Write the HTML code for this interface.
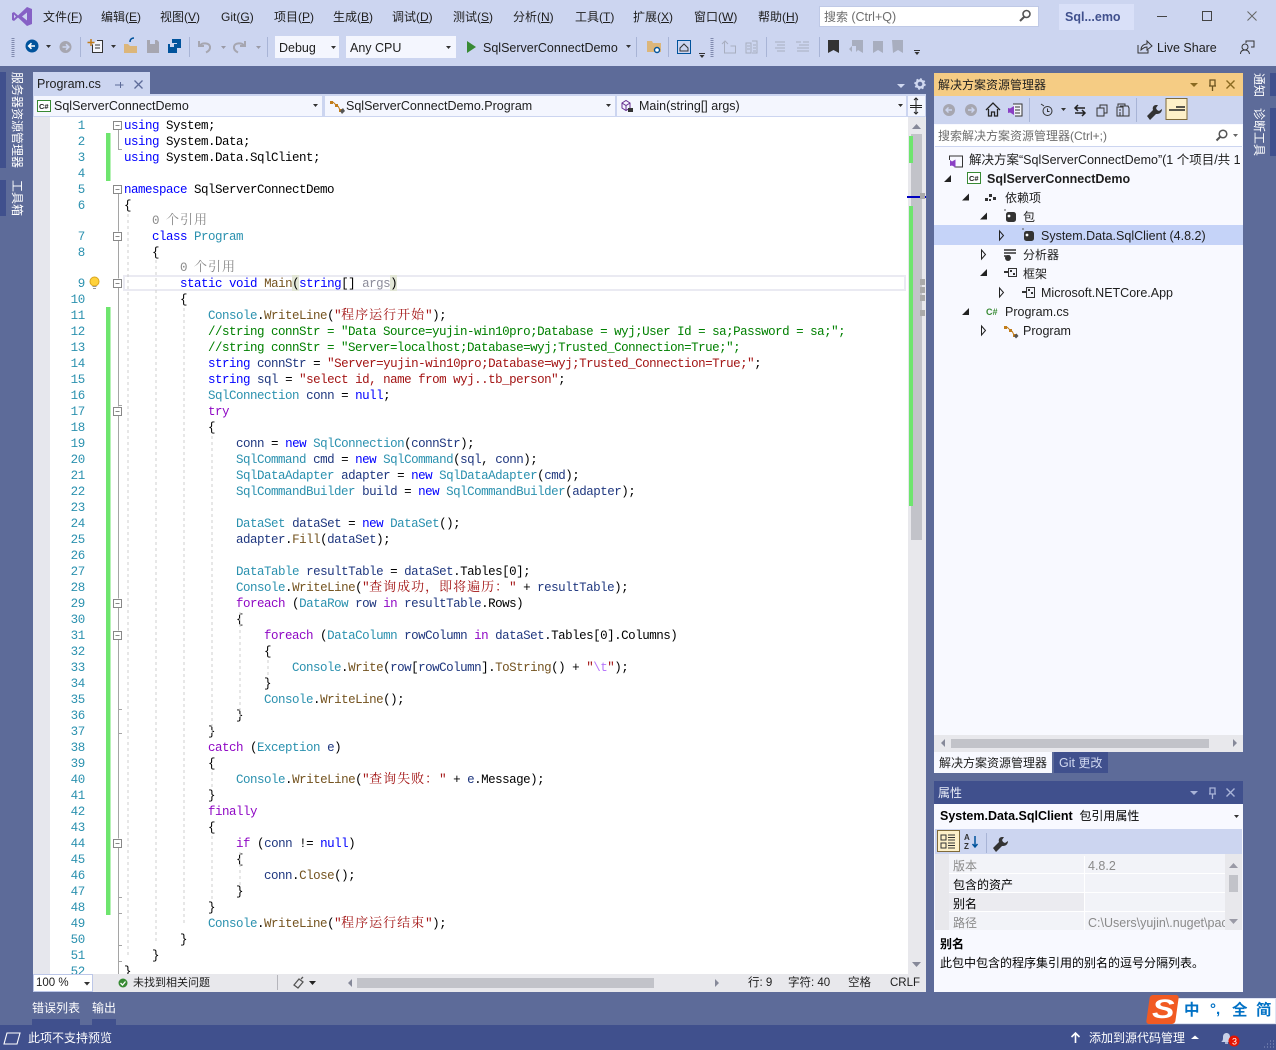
<!DOCTYPE html>
<html><head><meta charset="utf-8"><style>
*{margin:0;padding:0;box-sizing:border-box}
html,body{width:1276px;height:1050px;overflow:hidden;background:#5d6b99}
body{position:relative;font-family:"Liberation Sans","Noto Sans CJK SC",sans-serif;font-size:12px;color:#1e1e1e}
.b{position:absolute}
.t{position:absolute;white-space:nowrap;line-height:16px}
.t u{text-decoration:underline}
.n{font-size:12.5px}
svg.o{position:absolute;left:0;top:0;z-index:5}
#code{position:absolute;left:33px;top:117px;width:875px;height:857px;overflow:hidden;background:#fff;z-index:1}
.r{position:absolute;left:0;height:16px;width:875px;font:12.5px/18px "Liberation Mono","Noto Serif CJK SC",monospace;letter-spacing:-.5px;white-space:pre;padding-left:91px;color:#000}
.r i{position:absolute;left:0;width:52px;text-align:right;font-style:normal;color:#2b91af;letter-spacing:-.3px}
.k{color:#00f}.p{color:#8f08c4}.y{color:#2b91af}.s{color:#a31515}.m{color:#74531f}.v{color:#1f377f}.g{color:#008000}.e{color:#b776fb}
.z{font-size:13px;letter-spacing:1px}
.l{color:#8a8a8a}
.vt{position:absolute;writing-mode:vertical-rl;text-orientation:sideways;color:#fff;font-size:12px;line-height:12px;white-space:nowrap}
</style></head><body>

<div class="b" style="left:0;top:0;width:1276px;height:66px;background:#ccd5f0"></div>

<!-- menu -->
<div class="t" style="left:43px;top:9px">文件(<u>F</u>)</div>
<div class="t" style="left:101px;top:9px">编辑(<u>E</u>)</div>
<div class="t" style="left:160px;top:9px">视图(<u>V</u>)</div>
<div class="t" style="left:221px;top:9px">Git(<u>G</u>)</div>
<div class="t" style="left:274px;top:9px">项目(<u>P</u>)</div>
<div class="t" style="left:333px;top:9px">生成(<u>B</u>)</div>
<div class="t" style="left:392px;top:9px">调试(<u>D</u>)</div>
<div class="t" style="left:453px;top:9px">测试(<u>S</u>)</div>
<div class="t" style="left:513px;top:9px">分析(<u>N</u>)</div>
<div class="t" style="left:575px;top:9px">工具(<u>T</u>)</div>
<div class="t" style="left:633px;top:9px">扩展(<u>X</u>)</div>
<div class="t" style="left:694px;top:9px">窗口(<u>W</u>)</div>
<div class="t" style="left:758px;top:9px">帮助(<u>H</u>)</div>

<div class="b" style="left:819px;top:6px;width:220px;height:21px;background:#fff;border:1px solid #bfc9e6"></div>
<div class="t" style="left:824px;top:9px;color:#6d6d6d">搜索 <span class="n">(Ctrl+Q)</span></div>
<div class="b" style="left:1059px;top:4px;width:75px;height:26px;background:#d9e0f8"></div>
<div class="t n" style="left:1065px;top:9px;font-weight:bold;color:#40508d">Sql...emo</div>

<!-- toolbar combos -->
<div class="b" style="left:275px;top:36px;width:64px;height:22px;background:#f4f6fe"></div>
<div class="t n" style="left:279px;top:40px">Debug</div>
<div class="b" style="left:346px;top:36px;width:110px;height:22px;background:#f4f6fe"></div>
<div class="t n" style="left:350px;top:40px">Any CPU</div>
<div class="t n" style="left:483px;top:40px">SqlServerConnectDemo</div>
<div class="t n" style="left:1157px;top:40px">Live Share</div>

<!-- left tabs -->
<div class="b" style="left:0;top:72px;width:6px;height:96px;background:#40508d"></div>
<div class="b" style="left:0;top:180px;width:6px;height:36px;background:#40508d"></div>
<div class="vt" style="left:11px;top:72px">服务器资源管理器</div>
<div class="vt" style="left:11px;top:180px">工具箱</div>

<!-- right tabs -->
<div class="b" style="left:1270px;top:73px;width:6px;height:23px;background:#40508d"></div>
<div class="b" style="left:1270px;top:108px;width:6px;height:48px;background:#40508d"></div>
<div class="vt" style="left:1253px;top:73px">通知</div>
<div class="vt" style="left:1253px;top:108px">诊断工具</div>

<!-- doc tab -->
<div class="b" style="left:33px;top:72px;width:117px;height:23px;background:#ccd5f0"></div>
<div class="t n" style="left:37px;top:76px">Program.cs</div>
<div class="b" style="left:33px;top:94px;width:893px;height:23px;background:#ccd5f0"></div>
<div class="b" style="left:34px;top:96px;width:288px;height:20px;background:#f4f6fe"></div>
<div class="b" style="left:325px;top:96px;width:290px;height:20px;background:#f4f6fe"></div>
<div class="b" style="left:617px;top:96px;width:289px;height:20px;background:#f4f6fe"></div>
<div class="b" style="left:908px;top:96px;width:17px;height:20px;background:#f4f6fe"></div>
<div class="t n" style="left:54px;top:98px">SqlServerConnectDemo</div>
<div class="t n" style="left:346px;top:98px">SqlServerConnectDemo.Program</div>
<div class="t n" style="left:639px;top:98px">Main(string[] args)</div>

<!-- code -->
<div id="code">
<div class="b" style="left:0;top:0;width:17px;height:857px;background:#e6e7ed"></div>
<div class="b" style="left:90px;top:158px;width:783px;height:16px;border:2px solid #eaeaf2"></div>
<div class="b" style="left:259px;top:158px;width:7px;height:16px;background:#e2e6d6"></div>
<div class="b" style="left:357px;top:158px;width:7px;height:16px;background:#e2e6d6"></div>

<div class="r" style="top:0"><i>1</i><span class="k">using</span> System;</div>
<div class="r" style="top:16px"><i>2</i><span class="k">using</span> System.Data;</div>
<div class="r" style="top:32px"><i>3</i><span class="k">using</span> System.Data.SqlClient;</div>
<div class="r" style="top:48px"><i>4</i></div>
<div class="r" style="top:64px"><i>5</i><span class="k">namespace</span> SqlServerConnectDemo</div>
<div class="r" style="top:80px"><i>6</i>{</div>
<div class="r l" style="top:95px;padding-left:119px">0 <span class="z">个引用</span></div>
<div class="r" style="top:111px"><i>7</i>    <span class="k">class</span> <span class="y">Program</span></div>
<div class="r" style="top:127px"><i>8</i>    {</div>
<div class="r l" style="top:142px;padding-left:147px">0 <span class="z">个引用</span></div>
<div class="r" style="top:158px"><i>9</i>        <span class="k">static</span> <span class="k">void</span> <span class="m">Main</span>(<span class="k">string</span>[] <span style="color:#8c8c9a">args</span>)</div>
<div class="r" style="top:174px"><i>10</i>        {</div>
<div class="r" style="top:190px"><i>11</i>            <span class="y">Console</span>.<span class="m">WriteLine</span>(<span class="s">"<span class="z">程序运行开始</span>"</span>);</div>
<div class="r g" style="top:206px"><i>12</i>            //string connStr = "Data Source=yujin-win10pro;Database = wyj;User Id = sa;Password = sa;";</div>
<div class="r g" style="top:222px"><i>13</i>            //string connStr = "Server=localhost;Database=wyj;Trusted_Connection=True;";</div>
<div class="r" style="top:238px"><i>14</i>            <span class="k">string</span> <span class="v">connStr</span> = <span class="s">"Server=yujin-win10pro;Database=wyj;Trusted_Connection=True;"</span>;</div>
<div class="r" style="top:254px"><i>15</i>            <span class="k">string</span> <span class="v">sql</span> = <span class="s">"select id, name from wyj..tb_person"</span>;</div>
<div class="r" style="top:270px"><i>16</i>            <span class="y">SqlConnection</span> <span class="v">conn</span> = <span class="k">null</span>;</div>
<div class="r" style="top:286px"><i>17</i>            <span class="p">try</span></div>
<div class="r" style="top:302px"><i>18</i>            {</div>
<div class="r" style="top:318px"><i>19</i>                <span class="v">conn</span> = <span class="k">new</span> <span class="y">SqlConnection</span>(<span class="v">connStr</span>);</div>
<div class="r" style="top:334px"><i>20</i>                <span class="y">SqlCommand</span> <span class="v">cmd</span> = <span class="k">new</span> <span class="y">SqlCommand</span>(<span class="v">sql</span>, <span class="v">conn</span>);</div>
<div class="r" style="top:350px"><i>21</i>                <span class="y">SqlDataAdapter</span> <span class="v">adapter</span> = <span class="k">new</span> <span class="y">SqlDataAdapter</span>(<span class="v">cmd</span>);</div>
<div class="r" style="top:366px"><i>22</i>                <span class="y">SqlCommandBuilder</span> <span class="v">build</span> = <span class="k">new</span> <span class="y">SqlCommandBuilder</span>(<span class="v">adapter</span>);</div>
<div class="r" style="top:382px"><i>23</i></div>
<div class="r" style="top:398px"><i>24</i>                <span class="y">DataSet</span> <span class="v">dataSet</span> = <span class="k">new</span> <span class="y">DataSet</span>();</div>
<div class="r" style="top:414px"><i>25</i>                <span class="v">adapter</span>.<span class="m">Fill</span>(<span class="v">dataSet</span>);</div>
<div class="r" style="top:430px"><i>26</i></div>
<div class="r" style="top:446px"><i>27</i>                <span class="y">DataTable</span> <span class="v">resultTable</span> = <span class="v">dataSet</span>.Tables[0];</div>
<div class="r" style="top:462px"><i>28</i>                <span class="y">Console</span>.<span class="m">WriteLine</span>(<span class="s">"<span class="z">查询成功，即将遍历：</span>"</span> + <span class="v">resultTable</span>);</div>
<div class="r" style="top:478px"><i>29</i>                <span class="p">foreach</span> (<span class="y">DataRow</span> <span class="v">row</span> <span class="p">in</span> <span class="v">resultTable</span>.Rows)</div>
<div class="r" style="top:494px"><i>30</i>                {</div>
<div class="r" style="top:510px"><i>31</i>                    <span class="p">foreach</span> (<span class="y">DataColumn</span> <span class="v">rowColumn</span> <span class="p">in</span> <span class="v">dataSet</span>.Tables[0].Columns)</div>
<div class="r" style="top:526px"><i>32</i>                    {</div>
<div class="r" style="top:542px"><i>33</i>                        <span class="y">Console</span>.<span class="m">Write</span>(<span class="v">row</span>[<span class="v">rowColumn</span>].<span class="m">ToString</span>() + <span class="s">"</span><span class="e">\t</span><span class="s">"</span>);</div>
<div class="r" style="top:558px"><i>34</i>                    }</div>
<div class="r" style="top:574px"><i>35</i>                    <span class="y">Console</span>.<span class="m">WriteLine</span>();</div>
<div class="r" style="top:590px"><i>36</i>                }</div>
<div class="r" style="top:606px"><i>37</i>            }</div>
<div class="r" style="top:622px"><i>38</i>            <span class="p">catch</span> (<span class="y">Exception</span> <span class="v">e</span>)</div>
<div class="r" style="top:638px"><i>39</i>            {</div>
<div class="r" style="top:654px"><i>40</i>                <span class="y">Console</span>.<span class="m">WriteLine</span>(<span class="s">"<span class="z">查询失败：</span>"</span> + <span class="v">e</span>.Message);</div>
<div class="r" style="top:670px"><i>41</i>            }</div>
<div class="r" style="top:686px"><i>42</i>            <span class="p">finally</span></div>
<div class="r" style="top:702px"><i>43</i>            {</div>
<div class="r" style="top:718px"><i>44</i>                <span class="p">if</span> (<span class="v">conn</span> != <span class="k">null</span>)</div>
<div class="r" style="top:734px"><i>45</i>                {</div>
<div class="r" style="top:750px"><i>46</i>                    <span class="v">conn</span>.<span class="m">Close</span>();</div>
<div class="r" style="top:766px"><i>47</i>                }</div>
<div class="r" style="top:782px"><i>48</i>            }</div>
<div class="r" style="top:798px"><i>49</i>            <span class="y">Console</span>.<span class="m">WriteLine</span>(<span class="s">"<span class="z">程序运行结束</span>"</span>);</div>
<div class="r" style="top:814px"><i>50</i>        }</div>
<div class="r" style="top:830px"><i>51</i>    }</div>
<div class="r" style="top:846px"><i>52</i>}</div>
</div>

<!-- editor bottom bar -->
<div class="b" style="left:33px;top:974px;width:893px;height:18px;background:#e8e8ec;z-index:2"></div>
<div class="b" style="left:33px;top:974px;width:60px;height:18px;background:#fff;border:1px solid #bcc7e8;z-index:2"></div>
<div class="t" style="left:36px;top:975px;font-size:11.5px;z-index:3">100 %</div>
<div class="t" style="left:133px;top:975px;font-size:11px;z-index:3">未找到相关问题</div>
<div class="b" style="left:357px;top:978px;width:297px;height:10px;background:#c2c3c9;z-index:3"></div>
<div class="t" style="left:748px;top:975px;font-size:11.5px;z-index:3">行: 9</div>
<div class="t" style="left:788px;top:975px;font-size:11.5px;z-index:3">字符: 40</div>
<div class="t" style="left:848px;top:975px;font-size:11.5px;z-index:3">空格</div>
<div class="t" style="left:890px;top:975px;font-size:11.5px;z-index:3">CRLF</div>

<!-- editor vscroll -->
<div class="b" style="left:908px;top:117px;width:18px;height:857px;background:#e8e8ec;z-index:2"></div>
<div class="b" style="left:911px;top:134px;width:11px;height:406px;background:#c2c3c9;z-index:2"></div>
<div class="b" style="left:909px;top:136px;width:4px;height:27px;background:#6ee56e;z-index:3"></div>
<div class="b" style="left:909px;top:206px;width:4px;height:300px;background:#6ee56e;z-index:3"></div>
<div class="b" style="left:907px;top:196px;width:19px;height:2px;background:#0000c0;z-index:3"></div>
<div class="b" style="left:920px;top:193px;width:5px;height:6px;background:#aaa;z-index:3"></div>
<div class="b" style="left:920px;top:279px;width:5px;height:6px;background:#aaa;z-index:3"></div>
<div class="b" style="left:920px;top:287px;width:5px;height:6px;background:#aaa;z-index:3"></div>
<div class="b" style="left:920px;top:295px;width:5px;height:6px;background:#aaa;z-index:3"></div>
<div class="b" style="left:920px;top:310px;width:5px;height:6px;background:#aaa;z-index:3"></div>

<!-- solution explorer -->
<div class="b" style="left:934px;top:73px;width:309px;height:23px;background:#f5cc84"></div>
<div class="t" style="left:938px;top:77px">解决方案资源管理器</div>
<div class="b" style="left:934px;top:96px;width:309px;height:28px;background:#ccd5f0"></div>
<div class="b" style="left:934px;top:124px;width:309px;height:611px;background:#f8f9ff"></div>
<div class="b" style="left:935px;top:125px;width:307px;height:22px;background:#fff;border-bottom:1px solid #ccd5f0"></div>
<div class="t" style="left:938px;top:128px;color:#6d6d6d">搜索解决方案资源管理器(Ctrl+;)</div>
<div class="b" style="left:934px;top:225px;width:309px;height:20px;background:#c5d3f8"></div>
<div class="b" style="left:934px;top:150px;width:309px;height:200px;overflow:hidden">
<div class="t n" style="left:35px;top:2px">解决方案“SqlServerConnectDemo”(1 个项目/共 1 个)</div>
<div class="t n" style="left:53px;top:21px;font-weight:bold">SqlServerConnectDemo</div>
<div class="t" style="left:71px;top:40px">依赖项</div>
<div class="t" style="left:89px;top:59px">包</div>
<div class="t n" style="left:107px;top:78px">System.Data.SqlClient (4.8.2)</div>
<div class="t" style="left:89px;top:97px">分析器</div>
<div class="t" style="left:89px;top:116px">框架</div>
<div class="t n" style="left:107px;top:135px">Microsoft.NETCore.App</div>
<div class="t n" style="left:71px;top:154px">Program.cs</div>
<div class="t n" style="left:89px;top:173px">Program</div>
</div>
<div class="b" style="left:934px;top:735px;width:309px;height:17px;background:#e8e8ec"></div>
<div class="b" style="left:951px;top:739px;width:258px;height:9px;background:#c2c3c9"></div>
<div class="b" style="left:934px;top:752px;width:118px;height:21px;background:#f8f9ff"></div>
<div class="t" style="left:939px;top:755px">解决方案资源管理器</div>
<div class="b" style="left:1054px;top:752px;width:54px;height:21px;background:#40508d"></div>
<div class="t" style="left:1059px;top:755px;color:#d0d8f0"><span class="n">Git</span> 更改</div>

<!-- properties -->
<div class="b" style="left:934px;top:781px;width:309px;height:23px;background:#40508d"></div>
<div class="t" style="left:938px;top:785px;color:#e8ecf8">属性</div>
<div class="b" style="left:934px;top:804px;width:309px;height:188px;background:#f8f9ff"></div>
<div class="t" style="left:940px;top:808px;color:#000"><b class="n">System.Data.SqlClient</b>&nbsp; 包引用属性</div>
<div class="b" style="left:935px;top:829px;width:307px;height:25px;background:#ccd5f0"></div>
<div class="b" style="left:937px;top:830px;width:23px;height:22px;background:#fdf0c8;border:1px solid #7f6a3a"></div>
<div class="b" style="left:935px;top:854px;width:307px;height:76px;background:#f2f3f8"></div>
<div class="b" style="left:935px;top:854px;width:14px;height:76px;background:#e8e8ec"></div>
<div class="b" style="left:1225px;top:854px;width:17px;height:76px;background:#e8e8ec"></div>
<div class="b" style="left:1229px;top:875px;width:9px;height:17px;background:#c2c3c9"></div>
<div class="b" style="left:949px;top:873px;width:276px;height:1px;background:#fff"></div>
<div class="b" style="left:949px;top:892px;width:276px;height:1px;background:#fff"></div>
<div class="b" style="left:949px;top:893px;width:135px;height:19px;background:#ebebf0"></div>
<div class="b" style="left:949px;top:911px;width:276px;height:1px;background:#fff"></div>
<div class="b" style="left:1084px;top:856px;width:1px;height:74px;background:#fff"></div>
<div class="t" style="left:953px;top:858px;color:#8a8a8a">版本</div>
<div class="t n" style="left:1088px;top:858px;color:#8a8a8a">4.8.2</div>
<div class="t" style="left:953px;top:877px;color:#000">包含的资产</div>
<div class="t" style="left:953px;top:896px;color:#000">别名</div>
<div class="t" style="left:953px;top:915px;color:#8a8a8a">路径</div>
<div class="b" style="left:1085px;top:912px;width:140px;height:18px;overflow:hidden"><div class="t n" style="left:3px;top:3px;color:#8a8a8a">C:\Users\yujin\.nuget\packages</div></div>
<div class="t" style="left:940px;top:936px;font-weight:bold;color:#000">别名</div>
<div class="t" style="left:940px;top:955px;color:#000">此包中包含的程序集引用的别名的逗号分隔列表。</div>

<!-- bottom tabs -->
<div class="t" style="left:32px;top:1000px;color:#fff">错误列表</div>
<div class="b" style="left:32px;top:1019px;width:48px;height:6px;background:#40508d"></div>
<div class="t" style="left:92px;top:1000px;color:#fff">输出</div>
<div class="b" style="left:92px;top:1019px;width:24px;height:6px;background:#40508d"></div>

<!-- status bar -->
<div class="b" style="left:0;top:1025px;width:1276px;height:25px;background:#40508d"></div>
<div class="t" style="left:28px;top:1030px;color:#fff">此项不支持预览</div>
<div class="t" style="left:1089px;top:1030px;color:#fff">添加到源代码管理</div>

<!-- sogou -->
<div class="b" style="left:1172px;top:998px;width:104px;height:26px;background:#fff;z-index:6;border:1px solid #dfe4f4"></div>
<div class="t" style="left:1184px;top:1003px;font-size:15.5px;font-weight:bold;color:#0071c5;z-index:7">中</div>
<div class="t" style="left:1210px;top:1002px;font-size:15px;font-weight:bold;color:#0071c5;z-index:7">°,</div>
<div class="t" style="left:1232px;top:1003px;font-size:15.5px;font-weight:bold;color:#0071c5;z-index:7">全</div>
<div class="t" style="left:1256px;top:1003px;font-size:15.5px;font-weight:bold;color:#0071c5;z-index:7">简</div>
<div class="b" style="left:1148px;top:995px;width:29px;height:29px;background:#f15a22;transform:skewX(-8deg);border-radius:3px;z-index:7"></div>
<div class="t" style="left:1152px;top:998px;font-size:27px;line-height:23px;font-weight:bold;color:#fff;font-style:italic;z-index:8;transform:scaleX(1.25);transform-origin:left">S</div>

<svg class="o" width="1276" height="1050" viewBox="0 0 1276 1050" style="z-index:6">
<!-- VS logo -->
<path fill="#8661c5" fill-rule="evenodd" d="M27 7 18 15.5 14 12 12 13V20L14 21 18 17.5 27 26 32 24V9ZM27 12.5V20.5L22 16.5ZM14 14.5V18.5L16 16.5Z"/>
<!-- window controls -->
<path d="M1157 16.5H1167" stroke="#444" fill="none"/>
<rect x="1202.5" y="11.5" width="9" height="9" stroke="#444" fill="none"/>
<path d="M1247.5 11.5l9 9M1256.5 11.5l-9 9" stroke="#666" fill="none"/>
<!-- search icon -->
<circle cx="1026.5" cy="14" r="3.5" fill="none" stroke="#555" stroke-width="1.6"/><path d="M1024 17l-4 4" stroke="#555" stroke-width="2"/>
<!-- grips -->
<path d="M13 38V57" stroke="#7f89ad" stroke-dasharray="1 1" stroke-width="3"/>
<path d="M712 38V57" stroke="#7f89ad" stroke-dasharray="1 1" stroke-width="3"/>
<!-- seps -->
<path d="M80.5 37V57M189.5 37V57M267.5 37V57M636.5 37V57M668.5 37V57M766.5 37V57M819.5 37V57" stroke="#a8b4d6"/>
<!-- back / fwd -->
<circle cx="32" cy="46" r="6.5" fill="#00539c"/><path d="M35 46H29M31.5 43.2 28.7 46l2.8 2.8" stroke="#fff" stroke-width="1.6" fill="none"/>
<circle cx="65.5" cy="47" r="6" fill="#a6a6b0"/><path d="M62.5 47H68.5M66 44.2l2.8 2.8L66 49.8" stroke="#ccd5f0" stroke-width="1.6" fill="none"/>
<path d="M46 45h5l-2.5 3zM111 45h5l-2.5 3zM331 46h5l-2.5 3zM446 46h5l-2.5 3zM626 45h5l-2.5 3z" fill="#333"/>
<path d="M221 46h5l-2.5 3zM256 46h5l-2.5 3z" fill="#9a9aa6"/>
<!-- new project -->
<path d="M92.5 44.5V52.5H102.5V40.5H97" fill="#f3f4fa" stroke="#333"/><path d="M91 39v7M87.5 42.5h7" stroke="#c27d1a" stroke-width="1.5"/>
<path d="M95 45h5M95 48h5" stroke="#333"/>
<!-- open -->
<path d="M124 44h4l2 2h7v7h-13z" fill="#dcb67a"/><path d="M130 42c0-3 2-4 4-4" stroke="#00539c" stroke-width="1.5" fill="none"/>
<!-- save -->
<path d="M147 40h10l2 2v11h-12z" fill="#a6a6b0"/><rect x="150" y="40" width="5" height="4" fill="#ccd5f0"/>
<path d="M168 44h9v9h-9z" fill="#00539c"/><path d="M172 39h9v9h-4v-5h-5z" fill="#00539c"/><rect x="170" y="44" width="4" height="3" fill="#ccd5f0"/>
<!-- undo/redo -->
<path d="M199 41v5h5M200 45.500c2-3 9-3 10 1 .5 3-2 5-4 6" stroke="#a6a6b0" stroke-width="2" fill="none"/>
<path d="M245 41v5h-5M244 45.500c-2-3-9-3-10 1-.5 3 2 5 4 6" stroke="#a6a6b0" stroke-width="2" fill="none"/>
<!-- play -->
<path d="M467 41 476 47 467 53z" fill="#388a34"/>
<!-- folder search -->
<path d="M647 41h5l1 2h8v9h-14z" fill="#dcb67a"/><circle cx="657" cy="50" r="2.500" fill="#fff" stroke="#00539c" stroke-width="1.4"/>
<!-- home -->
<rect x="677.500" y="40.500" width="13" height="13" fill="none" stroke="#00539c"/><path d="M680 48l4-4 4 4v3h-8z" fill="none" stroke="#333"/>
<path d="M699.500 55h5l-2.500 3z" fill="#333"/><path d="M699 53.500h6" stroke="#333"/>
<path d="M914.500 52h5l-2.500 3z" fill="#333"/><path d="M914 50.500h6" stroke="#333"/>
<!-- grey toolbar icons -->
<g stroke="#a8aebf" fill="none"><path d="M724.500 42v11h11v-7h-5M722 44l3-3 3 3"/><path d="M746 43h5v10h-5zM752 41h5v12h-5M747 46h3M747 49h3M753 45h3M753 48h3M753 51h3"/>
<path d="M775 42h10M777 45h8M775 48h10M777 51h8"/><path d="M796 42h5M803 42h6M799 45h10M797 48h12M797 51h12"/></g>
<path d="M828 40h11v13l-5.500-3-5.500 3z" fill="#333"/>
<g fill="#a8aebf"><path d="M852 40h11v13l-5-3-2 2v-6h-4l-3 3 3 3h4-4z"/><path d="M873 41h10v12l-5-3-5 3z"/><path d="M892 40h11v13l-5-3-5 3z"/></g>
<!-- live share -->
<path d="M1138 45v8h10v-3" stroke="#333" fill="none"/><path d="M1141 50c0-4 3-6 6-6v-3l5 5-5 4v-3c-2 0-4 1-6 3z" stroke="#333" fill="none"/>
<!-- feedback -->
<circle cx="1245" cy="47" r="3" fill="none" stroke="#333"/><path d="M1240.500 54c0-3 2-4 4.500-4s4 1 4.500 4M1246 43v-2h8v6h-3" stroke="#333" fill="none"/>
<!-- doc tab -->
<path d="M115 85h5M120.500 82v6M120.500 85h3" stroke="#5d6b99" fill="none"/>
<path d="M134.500 80.500l8 8M142.500 80.500l-8 8" stroke="#5d6b99" stroke-width="1.3" fill="none"/>
<path d="M897 84h8l-4 4z" fill="#d0d8f0"/>
<circle cx="920" cy="84" r="3.500" fill="none" stroke="#d0d8f0" stroke-width="2.400"/><circle cx="920" cy="84" r="5" fill="none" stroke="#d0d8f0" stroke-width="1.400" stroke-dasharray="2 1.900"/>
<!-- combos -->
<rect x="37.500" y="100.500" width="13" height="11" fill="#fff" stroke="#388a34"/><text x="39" y="109" font-family="Liberation Sans" font-size="7.500" fill="#222" font-weight="bold">C#</text>
<path d="M313 104h5l-2.500 3zM606 104h5l-2.500 3zM898 104h5l-2.500 3z" fill="#333"/>
<path d="M330 101h3v3h-3zM335 104h3v3h-3zM339 109h3v3h-3z" fill="#c27d1a"/><path d="M333 102l3 3M338 106l2 4" stroke="#c27d1a"/><path d="M340 111l3-3 2 3-3 3z" fill="#555"/>
<path d="M622 103l4-2.500 4 2.500v5l-4 2.500-4-2.500z" fill="none" stroke="#652d90"/><path d="M622 103l4 2.500 4-2.500M626 105.500v5" stroke="#652d90" fill="none"/><rect x="628" y="108" width="5" height="4" fill="#333"/>
<path d="M916 98v16M914 100l2-2 2 2M914 112l2 2 2-2" stroke="#222" fill="none"/><path d="M910 105.500h12M910 107.500h12" stroke="#222"/>
<!-- vscroll arrows -->
<path d="M912 129l4.500-5 4.500 5z" fill="#868999"/><path d="M912 962h9l-4.500 5z" fill="#868999"/>
<!-- green change bars -->
<path d="M106 133h4.500v48H106zM106 307h4.500v608H106z" fill="#6ee56e"/>
<!-- outline guides -->
<g stroke="#a5a5a5" fill="none">
<path d="M118.500 130V149.500H122M118.500 194V974"/>
<path d="M118.500 405.500H122M118.500 709.500H122M118.500 733.500H122M118.500 897.500H122M118.500 913.500H122M118.500 945.500H122M118.500 961.500H122"/>
</g>
<g stroke="#fff" fill="#fff"><rect x="113.500" y="121" width="8" height="8"/><rect x="113.500" y="185" width="8" height="8"/><rect x="113.500" y="232" width="8" height="8"/><rect x="113.500" y="279" width="8" height="8"/><rect x="113.500" y="407" width="8" height="8"/><rect x="113.500" y="599" width="8" height="8"/><rect x="113.500" y="631" width="8" height="8"/><rect x="113.500" y="839" width="8" height="8"/></g>
<g stroke="#888" fill="none"><path d="M113.500 121.500h8v8h-8zM115.500 125.500h4M113.500 185.500h8v8h-8zM115.500 189.500h4M113.500 232.500h8v8h-8zM115.500 236.500h4M113.500 279.500h8v8h-8zM115.500 283.500h4M113.500 407.500h8v8h-8zM115.500 411.500h4M113.500 599.500h8v8h-8zM115.500 603.500h4M113.500 631.500h8v8h-8zM115.500 635.500h4M113.500 839.500h8v8h-8zM115.500 843.500h4"/></g>
<!-- indent guides -->
<g stroke="#cfcfcf" stroke-dasharray="3 3" fill="none">
<path d="M128 214V958"/><path d="M156 260V942"/><path d="M184 308V926"/>
<path d="M212 436V734M212 772V790M212 836V902"/><path d="M240 612V718"/><path d="M268 660V678M240 852V888"/>
</g>
<!-- bulb -->
<circle cx="94.500" cy="281.500" r="4.500" fill="#ffd23c" stroke="#d9a520"/><path d="M92.500 286.500h4M93 288.500h3" stroke="#999"/>
<!-- bottom bar -->
<path d="M84 982h6l-3 3.500z" fill="#333"/>
<circle cx="123" cy="983" r="4.500" fill="#388a34"/><path d="M120.500 983l2 2 3-3.500" stroke="#fff" stroke-width="1.300" fill="none"/>
<path d="M277.500 975v15" stroke="#b5b5bb"/>
<path d="M294 985l5-6 4 3-5 6zM301 979l2-2" fill="none" stroke="#555" stroke-width="1.300"/>
<path d="M309 981h7l-3.500 4z" fill="#222"/>
<path d="M352 979v8l-4-4zM715 979v8l4-4z" fill="#868999"/>
<!-- sol exp title icons -->
<path d="M1190 83h8l-4 4z" fill="#8a6a20"/>
<path d="M1210 80h5v6h-5zM1209 86h7M1212.500 86v5" stroke="#6b5320" fill="none" stroke-width="1.300"/>
<path d="M1226.500 80.500l8 8M1234.500 80.500l-8 8" stroke="#8a6a20" stroke-width="1.400" fill="none"/>
<!-- sol exp toolbar -->
<circle cx="949" cy="110" r="6" fill="#a6a6b0"/><path d="M952 110h-6M948.500 107.500 946 110l2.500 2.500" stroke="#ccd5f0" stroke-width="1.400" fill="none"/>
<circle cx="971" cy="110" r="6" fill="#a6a6b0"/><path d="M968 110h6M971.500 107.500 974 110l-2.500 2.500" stroke="#ccd5f0" stroke-width="1.400" fill="none"/>
<path d="M986 110l7-7 7 7M988.500 109v7h3v-4h3v4h3v-7" fill="none" stroke="#222" stroke-width="1.300"/>
<path d="M1013 104h9v12h-7" fill="#f3f4fa" stroke="#333"/><path d="M1015 107h5M1015 110h5M1015 113h5" stroke="#333"/><path d="M1008 108v5l2-.5 4 2.500v-9l-4 2.500z" fill="#8a3fc4"/>
<path d="M1029.500 98v24M1136.500 98v24" stroke="#a8b4d6"/>
<circle cx="1047.500" cy="111" r="4.500" fill="none" stroke="#333"/><path d="M1047.500 108.500v3h2M1041 104l3 2" stroke="#333" fill="none"/>
<path d="M1061 108h5l-2.500 3z" fill="#333"/>
<path d="M1075 108h10M1078 105l-3 3 3 3M1085 113h-10M1082 110l3 3-3 3" stroke="#222" stroke-width="1.500" fill="none"/>
<path d="M1097 108h7v8h-7zM1100 108v-3h7v8h-3" stroke="#333" fill="none"/>
<path d="M1118 106v-2h7v2M1120 106h8l1 2v8h-9v-2M1117 107h6v9h-6zM1119 110h2M1119 113h2" stroke="#333" fill="none"/>
<path d="M1147 116l6-6c-1-3 1-5 3-5l2 0-2 3 1 2 2 1 3-2c0 3-2 5-5 5l-1 0-6 6z" fill="#333"/>
<rect x="1166" y="98.500" width="21" height="21" fill="#fdf0c8" stroke="#7f6a3a"/><path d="M1169 110h16M1176 107h9" stroke="#222" stroke-width="1.500"/>
<!-- sol search -->
<circle cx="1223" cy="134" r="3.800" fill="none" stroke="#555" stroke-width="1.500"/><path d="M1220 137l-3.500 3.500" stroke="#555" stroke-width="2"/>
<path d="M1233 134h5l-2.500 3z" fill="#666"/>
<!-- tree arrows -->
<path d="M951 175v7h-7zM969 193.500v7h-7zM987 212.500v7h-7zM987 269v7h-7zM969 308v7h-7z" fill="#222"/>
<path d="M999.500 231l4 4.500-4 4.500zM981.500 250l4 4.500-4 4.500zM999.500 288l4 4.500-4 4.500zM981.500 326l4 4.500-4 4.500z" fill="none" stroke="#222"/>
<!-- tree icons -->
<path d="M949.500 160v-4h13v11h-8" fill="none" stroke="#333"/><path d="M950 160v6l2-.5 3.500 2v-8l-3.500 2z" fill="#8a3fc4"/>
<rect x="967.500" y="172.500" width="13" height="11" fill="#fff" stroke="#388a34"/><text x="969" y="181" font-family="Liberation Sans" font-size="7.500" fill="#222" font-weight="bold">C#</text>
<path d="M985 198h3v3h-3zM989 194h3v3h-3zM993 197h3v3h-3zM989 199h2v2h-2z" fill="#333"/>
<rect x="1006" y="212" width="10" height="10" rx="2.500" fill="#333"/><circle cx="1009" cy="216" r="1.400" fill="#fff"/><path d="M1004 210h2" stroke="#555"/>
<rect x="1024" y="231" width="10" height="10" rx="2.500" fill="#333"/><circle cx="1027" cy="235" r="1.400" fill="#fff"/><path d="M1022 229h2" stroke="#555"/>
<path d="M1004 250h12M1004 253h12M1004 256h6" stroke="#333" stroke-width="1.500"/><circle cx="1008" cy="258" r="3" fill="#333"/>
<rect x="1008.500" y="268.500" width="8" height="8" fill="#f3f4fa" stroke="#333"/><path d="M1004 272h4" stroke="#333" stroke-width="2"/><rect x="1010" y="270" width="2" height="2" fill="#333"/><rect x="1013" y="273" width="2" height="2" fill="#333"/>
<rect x="1026.500" y="287.500" width="8" height="10" fill="#f3f4fa" stroke="#333"/><path d="M1022 292h4" stroke="#333" stroke-width="2"/><rect x="1028" y="289" width="2" height="2" fill="#333"/><rect x="1031" y="292" width="2" height="2" fill="#333"/>
<text x="986" y="315" font-family="Liberation Sans" font-size="9" font-weight="bold" fill="#388a34">C#</text>
<path d="M1004 326h3v3h-3zM1009 329h3v3h-3zM1013 334h3v3h-3z" fill="#c27d1a"/><path d="M1007 327l3 3M1012 331l2 4" stroke="#c27d1a"/><path d="M1014 336l2.500-2.500 2 2.500-2.500 2.500z" fill="#555"/>
<!-- hscroll -->
<path d="M945 739v8l-4-4zM1233 739v8l4-4z" fill="#868999"/>
<!-- prop title -->
<path d="M1190 791h8l-4 4z" fill="#a9b4d8"/>
<path d="M1210 788h5v6h-5zM1209 794h7M1212.500 794v5" stroke="#a9b4d8" fill="none" stroke-width="1.300"/>
<path d="M1226.500 788.500l8 8M1234.500 788.500l-8 8" stroke="#a9b4d8" stroke-width="1.400" fill="none"/>
<path d="M1234 815h5l-2.500 3z" fill="#333"/>
<!-- prop toolbar -->
<path d="M941 835h5v5h-5zM941 843h5v5h-5zM948 835h7M948 837.500h7M948 840h7M948 843h7M948 845.500h7M948 848h7" stroke="#333" fill="none"/>
<text x="964" y="840" font-family="Liberation Sans" font-size="8" font-weight="bold" fill="#333">A</text><text x="964" y="849" font-family="Liberation Sans" font-size="8" font-weight="bold" fill="#333">Z</text>
<path d="M975 836v11M972.500 844l2.500 3 2.500-3" stroke="#00539c" stroke-width="1.500" fill="none"/>
<path d="M986.500 833v20" stroke="#a8b4d6"/>
<path d="M993 848l6-6c-1-3 1-5 3-5l2 0-2 3 1 2 2 1 3-2c0 3-2 5-5 5l-1 0-6 6z" fill="#333"/>
<path d="M1229 868l4.500-5 4.500 5zM1229 919h9l-4.500 5z" fill="#9a9aa6"/>
<!-- status -->
<path d="M7 1033h13l-3 11H4z" fill="none" stroke="#fff" stroke-width="1.100"/>
<path d="M1075.500 1043v-9M1071.500 1037l4-4 4 4" stroke="#fff" stroke-width="1.600" fill="none"/>
<path d="M1191 1039h8l-4-3.500z" fill="#fff"/>
<path d="M1221 1042c2-1 2-3 2-5 0-3 2-4 3.500-4s3.500 1 3.500 4c0 2 0 4 2 5z" fill="#c8d0e8"/><path d="M1225 1043h3" stroke="#c8d0e8" stroke-width="1.500"/>
<circle cx="1234" cy="1041" r="5.500" fill="#e51400"/><text x="1232" y="1044.500" font-family="Liberation Sans" font-size="9" fill="#fff">3</text>
<path d="M1264 1047h1M1267 1047h1M1270 1047h1M1273 1047h1M1267 1044h1M1270 1044h1M1273 1044h1M1270 1041h1M1273 1041h1" stroke="#8a96c0"/>
</svg>
</body></html>
